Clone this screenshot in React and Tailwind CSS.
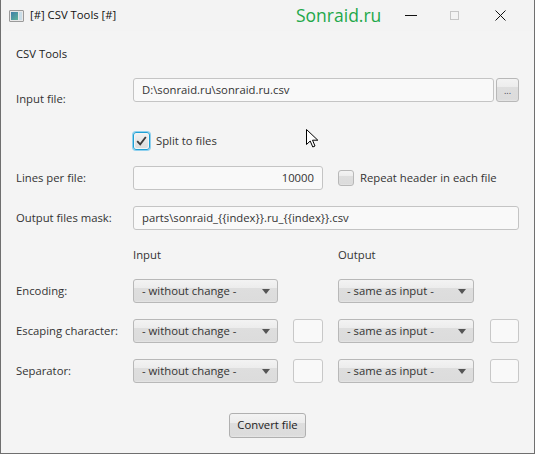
import React from 'react';

// ── small pieces ──────────────────────────────────────────────
const FONT = "font-['Open_Sans','Noto_Sans',sans-serif]";
const BTN_BG =
  'bg-[linear-gradient(#f3f3f3_0%,#ececec_38%,#dedede_38%,#dcdcdc_92%,#e6e6e6_100%)]';

function TextField({ value, className = '', right = false }) {
  return (
    <div
      className={`flex h-[24px] items-center rounded-[3px] border border-[#c4c4c4] bg-[#f9f9f9] px-[8px] text-[11.3px] text-[#333] ${
        right ? 'justify-end' : ''
      } ${className}`}
    >
      {value}
    </div>
  );
}

function Combo({ value, className = '' }) {
  return (
    <div
      className={`flex h-[24px] items-center justify-between rounded-[3px] border border-[#b8b8b8] pl-[8px] pr-[7px] text-[11.3px] text-[#333] ${BTN_BG} ${className}`}
    >
      <span>{value}</span>
      <svg width="8" height="5" viewBox="0 0 8 5">
        <polygon points="0,0 8,0 4,5" fill="#555" />
      </svg>
    </div>
  );
}

function SmallBox({ className = '' }) {
  return (
    <div className={`h-[24px] rounded-[3px] border border-[#c8c8c8] bg-[#f9f9f9] ${className}`} />
  );
}

function Label({ children, className = '' }) {
  return (
    <div className={`w-[117px] shrink-0 text-[11.3px] leading-4 text-[#333] ${className}`}>{children}</div>
  );
}

// ── app ───────────────────────────────────────────────────────
export default function App() {
  return (
    <div className={`relative flex h-[454px] w-[535px] flex-col border border-t-0 border-[#6f6f6f] bg-[#f4f4f4] ${FONT}`}>
      {/* title bar */}
      <div className="flex h-[31px] shrink-0 items-center bg-[#f3f3f3]">
        <div className="ml-[8px] flex h-[12px] w-[15px] items-center rounded-[1px] border border-[#9a9a9a] bg-[#e8e8e8] p-[1px]">
          <div className="h-full w-[8px] bg-[linear-gradient(135deg,#3d7ea8,#5fb39a)]" />
          <div className="ml-[1px] h-full w-[3px] bg-[#c9dde8]" />
        </div>
        <span className="ml-[6px] w-[266px] shrink-0 text-[11.3px] text-[#111]">[#] CSV Tools [#]</span>
        <span className="text-[17.5px] leading-none text-[#22a84a]">Sonraid.ru</span>
        <div className="ml-auto mr-[28px] flex items-center">
          <div className="h-px w-[12px] bg-[#111]" />
          <div className="ml-[33px] h-[9px] w-[9px] border border-[#c6c6c6]" />
          <svg className="ml-[36px]" width="11" height="11" viewBox="0 0 11 11">
            <path d="M0.5 0.5 L10.5 10.5 M10.5 0.5 L0.5 10.5" stroke="#111" strokeWidth="1" />
          </svg>
        </div>
      </div>

      {/* content */}
      <div className="flex flex-col px-[15px]">
        <div className="mt-[15px] h-[16px] text-[11.3px] leading-4 text-[#222]">CSV Tools</div>

        {/* input file */}
        <div className="mt-[16px] flex h-[24px] items-start">
          <Label className="pt-[13px]">Input file:</Label>
          <TextField value="D:\sonraid.ru\sonraid.ru.csv" className="w-[362px]" />
          <div
            className={`ml-[2px] flex h-[24px] w-[23px] items-center justify-center rounded-[3px] border border-[#b8b8b8] text-[9px] leading-none text-[#445] ${BTN_BG}`}
          >
            ...
          </div>
        </div>

        {/* split to files */}
        <div className="mt-[30px] flex h-[18px] items-center">
          <div className="w-[117px] shrink-0" />
          <div className="flex h-[18px] w-[17px] items-center justify-center rounded-[3px] border border-[#1ea0d4] shadow-[0_0_0_1px_#8fd0ee]">
            <div className="flex h-[14px] w-[13px] items-center justify-center rounded-[2px] bg-[linear-gradient(#f0f0f0,#dcdcdc)]">
              <svg width="11" height="10" viewBox="0 0 11 10">
                <path d="M1.2 5.2 L4.2 8.4 L9.8 1" fill="none" stroke="#3a3a3a" strokeWidth="1.8" />
              </svg>
            </div>
          </div>
          <span className="ml-[6px] text-[11.3px] text-[#333]">Split to files</span>
        </div>

        {/* lines per file */}
        <div className="mt-[16px] flex h-[24px] items-center">
          <Label>Lines per file:</Label>
          <TextField value="10000" right className="w-[190px]" />
          <div className={`ml-[15px] h-[16px] w-[16px] rounded-[3px] border border-[#b8b8b8] ${BTN_BG}`} />
          <span className="ml-[6px] text-[11.3px] text-[#333]">Repeat header in each file</span>
        </div>

        {/* output mask */}
        <div className="mt-[16px] flex h-[24px] items-center">
          <Label>Output files mask:</Label>
          <TextField value="parts\sonraid_{{index}}.ru_{{index}}.csv" className="w-[386px]" />
        </div>

        {/* column headings */}
        <div className="mt-[17px] flex h-[16px] items-center text-[11.3px] text-[#333]">
          <div className="w-[117px] shrink-0" />
          <div className="w-[205px]">Input</div>
          <div>Output</div>
        </div>

        {/* encoding */}
        <div className="mt-[16px] flex h-[24px] items-center">
          <Label>Encoding:</Label>
          <Combo value="- without change -" className="w-[145px]" />
          <div className="w-[60px]" />
          <Combo value="- same as input -" className="w-[136px]" />
        </div>

        {/* escaping */}
        <div className="mt-[16px] flex h-[24px] items-center">
          <Label>Escaping character:</Label>
          <Combo value="- without change -" className="w-[145px]" />
          <SmallBox className="ml-[15px] w-[30px]" />
          <Combo value="- same as input -" className="ml-[15px] w-[136px]" />
          <SmallBox className="ml-[16px] w-[29px]" />
        </div>

        {/* separator */}
        <div className="mt-[16px] flex h-[24px] items-center">
          <Label>Separator:</Label>
          <Combo value="- without change -" className="w-[145px]" />
          <SmallBox className="ml-[15px] w-[30px]" />
          <Combo value="- same as input -" className="ml-[15px] w-[136px]" />
          <SmallBox className="ml-[16px] w-[29px]" />
        </div>

        {/* convert */}
        <div className="mt-[30px] flex justify-center">
          <div
            className={`flex h-[25px] w-[77px] items-center justify-center rounded-[3px] border border-[#b0b0b0] text-[11.3px] text-[#222] ${BTN_BG}`}
          >
            Convert file
          </div>
        </div>
      </div>

      {/* mouse pointer over the form */}
      <svg className="absolute left-[305px] top-[129px]" width="13" height="19" viewBox="0 0 13 19">
        <path
          d="M0.5 0.5 L0.5 15.5 L4.2 12 L6.8 18 L9 17 L6.5 11.2 L11.8 11.2 Z"
          fill="#fff"
          stroke="#000"
          strokeWidth="1"
          strokeLinejoin="round"
        />
      </svg>
    </div>
  );
}
